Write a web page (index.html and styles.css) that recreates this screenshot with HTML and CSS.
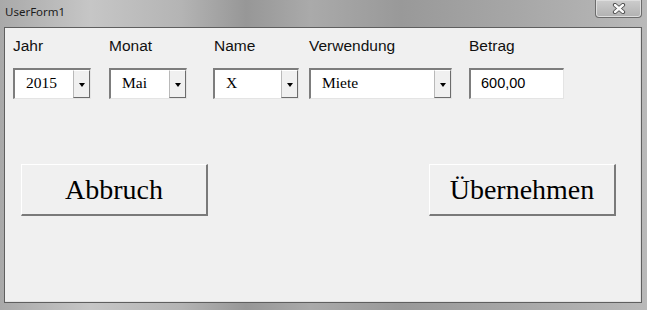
FILE: index.html
```html
<!doctype html>
<html lang="de">

<head>
    <meta charset="utf-8">
    <title>UserForm1</title>
    <link rel="stylesheet" href="styles.css">
</head>

<body>

    <div class="window">
        <div class="titlebar">
            <span class="title">UserForm1</span>
            <a href="javascript:void(0)" class="close" title="Schließen">
                <svg width="14" height="11" viewBox="0 0 14 11">
                    <path d="M3 2 L11 9 M11 2 L3 9" stroke="#4a4a4a" stroke-width="4.2" stroke-linecap="round" fill="none" />
                    <path d="M3 2 L11 9 M11 2 L3 9" stroke="#fafafa" stroke-width="2.4" stroke-linecap="round" fill="none" />
                </svg>
            </a>
        </div>

        <div class="client">
            <div class="fields">
                <div class="field f-jahr">
                    <label>Jahr</label>
                    <div class="combo">
                        <span class="value">2015</span>
                        <span class="drop"><i></i></span>
                    </div>
                </div>
                <div class="field f-monat">
                    <label>Monat</label>
                    <div class="combo">
                        <span class="value">Mai</span>
                        <span class="drop"><i></i></span>
                    </div>
                </div>
                <div class="field f-name">
                    <label>Name</label>
                    <div class="combo">
                        <span class="value">X</span>
                        <span class="drop"><i></i></span>
                    </div>
                </div>
                <div class="field f-verwendung">
                    <label>Verwendung</label>
                    <div class="combo">
                        <span class="value">Miete</span>
                        <span class="drop"><i></i></span>
                    </div>
                </div>
                <div class="field f-betrag">
                    <label>Betrag</label>
                    <div class="textbox">600,00</div>
                </div>
            </div>

            <div class="buttons">
                <button id="abbruch">Abbruch</button>
                <button id="uebernehmen">Übernehmen</button>
            </div>
        </div>
    </div>

</body>

</html>
```

FILE: styles.css
```css
body {
    margin: 0;
    padding: 0;
    font-family: "Liberation Sans", Arial, sans-serif;
    background-color: #a6a6a6;
}

.window {
    display: flex;
    flex-direction: column;
    width: 647px;
    height: 310px;
    background: linear-gradient(90deg, #a9a9a9 0%, #c6c6c6 14%, #b4b4b4 28%, #979797 38%, #aaaaaa 48%, #999999 62%, #a7a7a7 80%, #b9b9b9 100%);
}

.titlebar {
    display: flex;
    justify-content: space-between;
    align-items: flex-start;
    height: 27px;
}

.title {
    font-family: "Noto Sans", "Open Sans", sans-serif;
    font-size: 11.5px;
    color: #1c1c1c;
    padding: 4px 0 0 5px;
}

.close {
    display: flex;
    align-items: center;
    justify-content: center;
    width: 45px;
    height: 17px;
    margin-right: 5px;
    border: 1px solid #6c6c6c;
    border-top: none;
    border-radius: 0 0 4px 4px;
    background: linear-gradient(#cdcdcd, #b1b1b1);
    box-shadow: inset 0 0 0 1px #dedede;
}

.client {
    flex: 1;
    margin: 0 5px 7px 4px;
    border: 1px solid #5f5f5f;
    background-color: #f0f0f0;
    box-shadow: inset -1px -1px 0 #e2e2e2;
    padding: 9px 0 0 8px;
}

.fields {
    display: grid;
    grid-template-columns: 96px 104px 96px 160px 95px;
}

label {
    display: block;
    height: 17px;
    font-size: 15.5px;
    line-height: 17px;
    color: #111;
    margin-bottom: 14px;
}

.f-name label {
    padding-left: 1px;
}

.combo,
.textbox {
    display: flex;
    height: 28px;
    background: #fff;
    border-style: solid;
    border-width: 2px 1px 1px 2px;
    border-color: #7d7d7d #e4e4e4 #e4e4e4 #7d7d7d;
}

.f-jahr .combo,
.f-monat .combo {
    width: 75px;
}

.f-name .combo {
    width: 83px;
}

.f-verwendung .combo {
    width: 140px;
}

.value {
    flex: 1;
    font-family: "Liberation Serif", "Times New Roman", serif;
    font-size: 15.5px;
    line-height: 26px;
    padding-left: 11px;
    color: #000;
}

.drop {
    display: flex;
    align-items: center;
    justify-content: center;
    width: 15px;
    background: #f0f0f0;
    border-style: solid;
    border-width: 1px;
    border-color: #ffffff #6c6c6c #6c6c6c #b9b9b9;
}

.drop i {
    width: 0;
    height: 0;
    margin-top: 2px;
    border-left: 3.5px solid transparent;
    border-right: 3.5px solid transparent;
    border-top: 4px solid #000;
}

.textbox {
    box-sizing: border-box;
    width: 95px;
    height: 31px;
    padding-left: 10px;
    font-size: 14.5px;
    line-height: 27px;
    color: #000;
}

.buttons {
    display: flex;
    justify-content: space-between;
    margin-top: 65px;
    padding: 0 25px 0 8px;
}

button {
    width: 187px;
    height: 52px;
    background: #f0f0f0;
    border-style: solid;
    border-width: 1px 2px 2px 1px;
    border-color: #ffffff #7a7a7a #7a7a7a #ffffff;
    font-family: "Liberation Serif", "Times New Roman", serif;
    font-size: 28px;
    color: #000;
    padding: 0;
}
```
